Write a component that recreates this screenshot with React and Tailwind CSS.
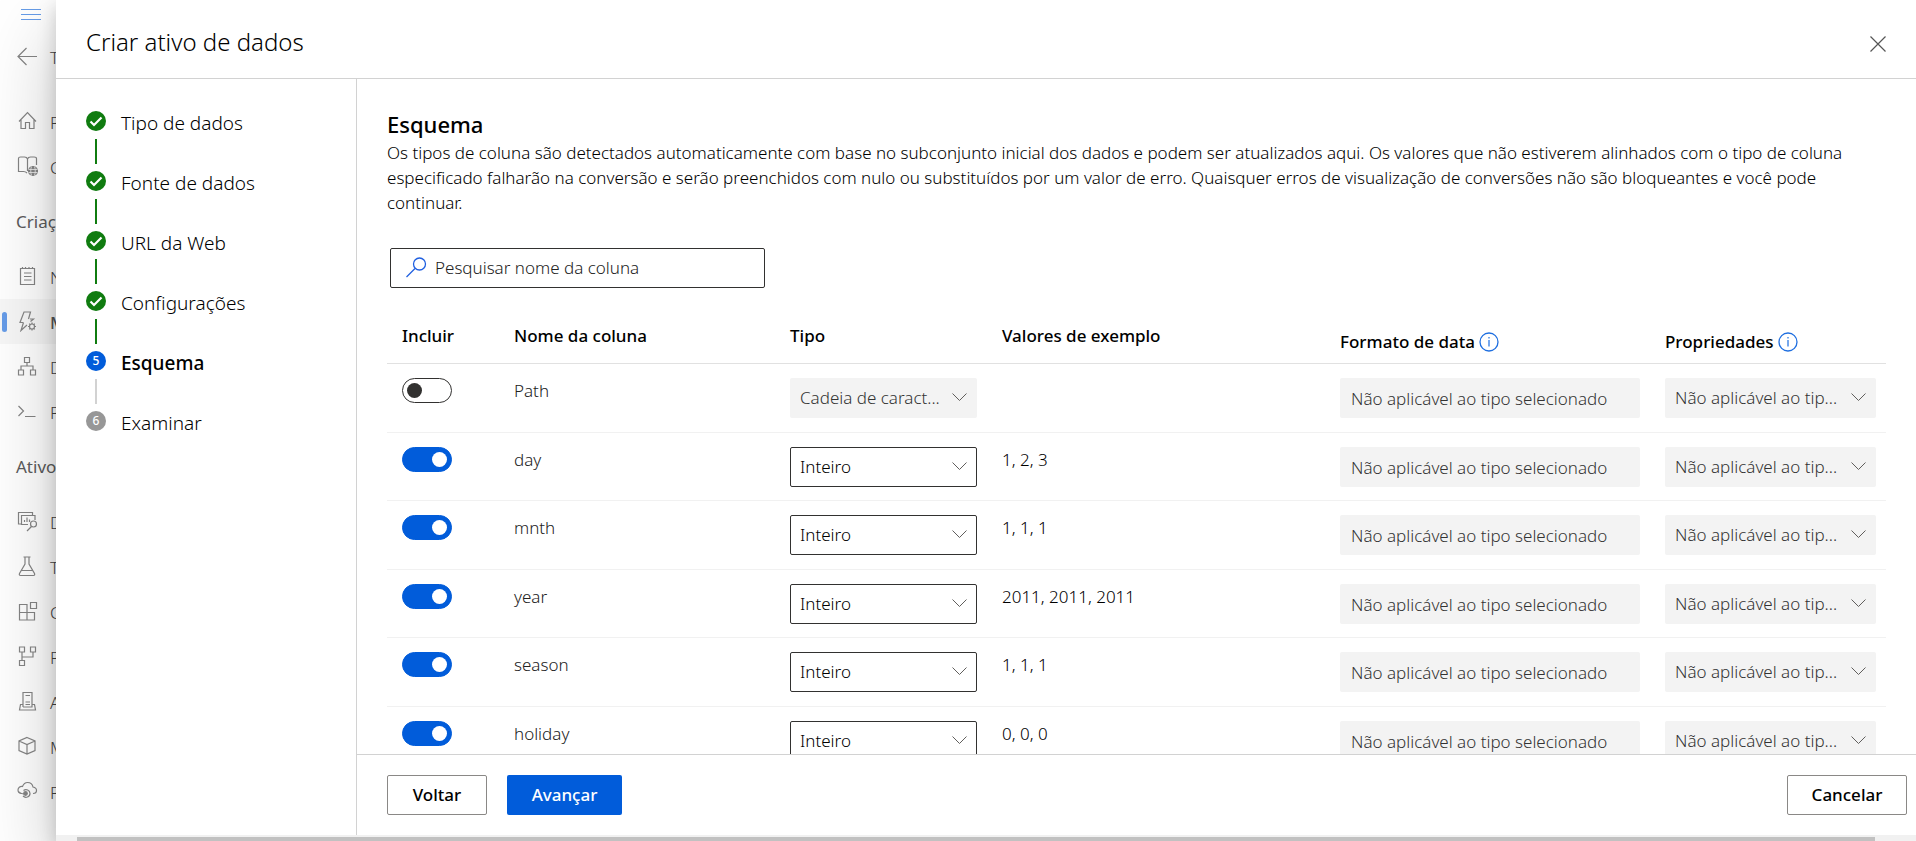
const NAV_ICONS = {
  home: <path d="M2 10.5 10.500 1.500 19 10.5M4 9v8.500h4.500v-6h4v6H17V9" />,
  book: (
    <>
      <path d="M10 17c-1-1-2-1.500-3.500-1.500H1.500V2.500c0-1 1-1.500 2-1.500h4c1.500 0 2.500.5 3 2 .5-1.500 1.500-2 3-2h3.500c1.500 0 2.500.5 2.500 1.500V9M10.500 3v12" />
      <circle cx="16" cy="15" r="4.500" fill="currentColor" />
      <path d="M11.500 13.500h9M11.500 16.500h9M14.500 10.500c-1 3-1 6 0 9M17.500 10.500c1 3 1 6 0 9" stroke="#f1f1f1" strokeWidth="0.8" />
    </>
  ),
  note: <path d="M3.500 2.500h14v16h-14zM5.500 1v2M8.500 1v2M12 1v2M15.500 1v2M7 7h7.500M7 10.500h7.500M7 14h7.500" />,
  bolt: (
    <>
      <path d="M13 8h3.500l-3 2.500M6.500 11.500H3L7 1h6.500L11.500 8M6.500 11.500 4 19.500 10 14" />
      <circle cx="15" cy="15.500" r="2.500" />
      <path d="M15 11.500v1.500M15 18v1.500M11 15.500h1.500M17.500 15.500H19M12.200 12.700l1 1M16.800 17.300l1 1M17.800 12.700l-1 1M13.200 17.300l-1 1" />
    </>
  ),
  tree: <path d="M7.500 1.500h5v5h-5zM1.500 14h5v5h-5zM13.500 14h5v5h-5zM10 6.500v3.500M4 14v-4h12v4" />,
  terminal: <path d="M1.500 5 6.500 10l-5 5M8 15.500h10.500" />,
  data: (
    <>
      <path d="M4 13H1.500V1.500h14V4M11 13.500H4.500V4.500H18V9M7.500 11V9M10 11V6.500M12.500 11V8.500" />
      <circle cx="16.500" cy="13" r="3" />
      <path d="m14.500 15.500-4.500 4.500" />
    </>
  ),
  flask: <path d="M6.500 1h7M8 1v7L2.500 17.500c-.5 1.500 0 2 1 2h13c1 0 1.500-.500 1-2L12 8V1M4.500 14.500h11" />,
  blocks: <path d="M2.500 3.500H10v15.500H2.500zM2.500 11.500H17.500V19H10M13.500 1.500h6v6h-6z" />,
  pipe: <path d="M2.500 1h5v5h-5zM13.500 1h5v5h-5zM2.500 14.500h5v5h-5zM5 6v8.500M16 6v5H5" />,
  server: <path d="M6 16V1.500h9V16H6M8.500 4.500H13M8.500 11H13M8.500 13.500H13M6 13.500H3.500L2.500 19h16l-1-5.500H15" />,
  cube: <path d="M10 1.500 18 5v9.500L10 18 2 14.500V5zM2 5l8 3.500L18 5M10 8.500V18" />,
  cloud: (
    <>
      <path d="M5 12.500c-2.500 0-4-1.500-4-3.500S3 5 5.500 5.500C6.500 3 8 1.500 10.500 1.500c3 0 5 2 5.500 4.500 2.500.5 3.500 2 3.500 3.500 0 2-1.500 3-3.500 3" />
      <path d="M6.500 9.500c2.500-2 6.500-.5 6.500 3s-4.500 5-7 2.500" />
      <path d="M1.500 10.500c1.500 2 4 2.500 6.500 2.500" />
      <circle cx="8.500" cy="12.500" r="1.800" fill="currentColor" />
    </>
  ),
};

function NavItem({ icon, label, active }) {
  return (
    <a
      href="#"
      className={
        active
          ? 'relative flex h-[45px] shrink-0 items-center gap-3 bg-black/3 pl-[17px] font-medium text-[#555]'
          : 'flex h-[45px] shrink-0 items-center gap-3 pl-[17px] text-[#444]'
      }
    >
      {active && <span className="absolute left-[2px] h-5 w-[5px] rounded-full bg-[#669ce8]" />}
      <svg className="size-[21px] shrink-0 text-[#858585]" viewBox="0 0 21 21" fill="none" stroke="currentColor" strokeWidth="1.2">
        {NAV_ICONS[icon]}
      </svg>
      <span className="pt-[2px]">{label}</span>
    </a>
  );
}

function NavHeading({ children }) {
  return <div className="flex h-[65px] shrink-0 items-center pl-4 text-[17px] font-normal text-[#5c5c5c]">{children}</div>;
}

function Sidebar() {
  return (
    <nav aria-label="Principal" className="flex w-14 shrink-0 flex-col bg-white">
      <button type="button" aria-label="Menu" className="mb-[6px] flex h-7 shrink-0 items-center pl-[21px] text-[#669ce8]">
        <svg className="h-3 w-5" viewBox="0 0 20 12" stroke="currentColor">
          <path d="M0 1.500h20M0 6.500h20M0 11.500h20" />
        </svg>
      </button>
      <a href="#" className="mb-5 flex h-[45px] shrink-0 items-center gap-3 pl-[17px] text-[#444]">
        <svg className="size-[21px] shrink-0 text-[#858585]" viewBox="0 0 21 21" fill="none" stroke="currentColor" strokeWidth="1.200">
          <path d="M20 10.500H1M9.500 2 1 10.500 9.500 19" />
        </svg>
        <span className="pt-[2px]">T</span>
      </a>
      <NavItem icon="home" label="P" />
      <NavItem icon="book" label="C" />
      <NavHeading>Criaç</NavHeading>
      <NavItem icon="note" label="N" />
      <NavItem icon="bolt" label="M" active />
      <NavItem icon="tree" label="D" />
      <NavItem icon="terminal" label="P" />
      <NavHeading>Ativo</NavHeading>
      <NavItem icon="data" label="D" />
      <NavItem icon="flask" label="T" />
      <NavItem icon="blocks" label="C" />
      <NavItem icon="pipe" label="P" />
      <NavItem icon="server" label="A" />
      <NavItem icon="cube" label="M" />
      <NavItem icon="cloud" label="P" />
    </nav>
  );
}

const STEPS = [
  { label: 'Tipo de dados', state: 'done' },
  { label: 'Fonte de dados', state: 'done' },
  { label: 'URL da Web', state: 'done' },
  { label: 'Configurações', state: 'done' },
  { label: 'Esquema', state: 'current' },
  { label: 'Examinar', state: 'todo' },
];

function StepMark({ state, number }) {
  if (state === 'done') {
    return (
      <svg className="size-5" viewBox="0 0 20 20" fill="none">
        <circle cx="10" cy="10" r="10" fill="#107c10" />
        <path d="m4.500 10.500 3.500 3.500 7.500-7.500" stroke="#fff" strokeWidth="2.200" />
      </svg>
    );
  }
  return (
    <span
      className={
        state === 'current'
          ? 'flex size-5 items-center justify-center rounded-full bg-[#015cda] text-xs font-medium text-white'
          : 'flex size-5 items-center justify-center rounded-full bg-[#979797] text-xs font-medium text-white'
      }
    >
      {number}
    </span>
  );
}

function Steps() {
  return (
    <ol className="w-[301px] shrink-0 border-r border-[#d2d2d2] pt-8 pl-[30px]">
      {STEPS.map((step, i) => (
        <li key={step.label} className="flex h-[60px] gap-[15px]">
          <div className="flex w-5 flex-col items-center gap-2">
            <StepMark state={step.state} number={i + 1} />
            {i < STEPS.length - 1 && (
              <span className={step.state === 'done' ? 'h-[25px] w-[2px] bg-[#107c10]' : 'h-[25px] w-[2px] bg-[#d2d2d2]'} />
            )}
          </div>
          <span className={step.state === 'current' ? 'text-[19px] leading-6 font-medium' : 'text-[19px] leading-6'}>
            {step.label}
          </span>
        </li>
      ))}
    </ol>
  );
}

function Chevron() {
  return (
    <svg className="pointer-events-none absolute top-[15px] right-[10px] h-[9px] w-[15px]" viewBox="0 0 15 9" fill="none" stroke="#605e5c">
      <path d="m.5.5 7 7 7-7" />
    </svg>
  );
}

function Select({ value, label, disabled }) {
  return (
    <div className="relative">
      <select
        aria-label={label}
        disabled={disabled}
        className={
          disabled
            ? 'block h-10 w-full appearance-none rounded-[2px] bg-[#f3f3f3] pr-8 pl-[10px] text-[#333] opacity-100'
            : 'block h-10 w-full appearance-none rounded-[2px] border border-[#323130] bg-white pr-8 pl-[9px] text-black'
        }
      >
        <option>{value}</option>
      </select>
      <Chevron />
    </div>
  );
}

function InfoIcon() {
  return (
    <svg className="size-5" viewBox="0 0 20 20" fill="none" stroke="#1f6fe0">
      <circle cx="10" cy="10" r="9" strokeWidth="1.300" />
      <path d="M10 8v6.500M10 5v1.500" strokeWidth="1.200" />
    </svg>
  );
}

const ROWS = [
  { name: 'Path', type: 'Cadeia de caract...', sample: '', on: false },
  { name: 'day', type: 'Inteiro', sample: '1, 2, 3', on: true },
  { name: 'mnth', type: 'Inteiro', sample: '1, 1, 1', on: true },
  { name: 'year', type: 'Inteiro', sample: '2011, 2011, 2011', on: true },
  { name: 'season', type: 'Inteiro', sample: '1, 1, 1', on: true },
  { name: 'holiday', type: 'Inteiro', sample: '0, 0, 0', on: true },
];

const NOT_APPLICABLE = 'Não aplicável ao tipo selecionado';

function SchemaTable() {
  return (
    <table className="mt-5 w-full table-fixed border-separate border-spacing-0 text-left">
      <colgroup>
        <col className="w-[112px]" />
        <col className="w-[276px]" />
        <col className="w-[212px]" />
        <col />
        <col className="w-[325px]" />
        <col className="w-[236px]" />
      </colgroup>
      <thead>
        <tr className="h-14 align-top leading-6 *:border-b *:border-[#e1e1e1] *:pl-[15px] *:font-medium">
          <th className="pt-4">Incluir</th>
          <th className="pt-4">Nome da coluna</th>
          <th className="pt-4">Tipo</th>
          <th className="pt-4">Valores de exemplo</th>
          <th className="pt-[22px]">
            <span className="flex items-center gap-1">
              Formato de data <InfoIcon />
            </span>
          </th>
          <th className="pt-[22px]">
            <span className="flex items-center gap-1">
              Propriedades <InfoIcon />
            </span>
          </th>
        </tr>
      </thead>
      <tbody>
        {ROWS.map((row) => (
          <tr
            key={row.name}
            className="align-top leading-[26px] odd:h-[69px] even:h-[68px] *:border-b *:border-[#f1f1f1] *:pt-[14px] *:pr-[10px] *:pl-[15px]"
          >
            <td>
              <input
                type="checkbox"
                role="switch"
                aria-label={`Incluir ${row.name}`}
                defaultChecked={row.on}
                className="flex h-[25px] w-[50px] appearance-none items-center rounded-full border border-[#323130] px-1 before:size-[15px] before:rounded-full before:bg-[#323130] checked:justify-end checked:border-[#015cda] checked:bg-[#015cda] checked:before:bg-white"
              />
            </td>
            <td className="text-[#222]">{row.name}</td>
            <td>
              <Select label={`Tipo de ${row.name}`} value={row.type} disabled={!row.on} />
            </td>
            <td>{row.sample}</td>
            <td>
              <input
                type="text"
                disabled
                aria-label={`Formato de data de ${row.name}`}
                defaultValue={NOT_APPLICABLE}
                className="block h-10 w-full rounded-[2px] bg-[#f3f3f3] px-[11px] text-[#333]"
              />
            </td>
            <td>
              <Select label={`Propriedades de ${row.name}`} value="Não aplicável ao tip..." disabled />
            </td>
          </tr>
        ))}
      </tbody>
    </table>
  );
}

function SchemaPage() {
  return (
    <main className="flex min-w-0 flex-1 flex-col">
      <section className="min-h-0 flex-1 overflow-hidden px-[30px] pt-[30px]">
        <h2 className="mb-px text-[22px] leading-[30px] font-medium">Esquema</h2>
        <p className="leading-[25px]">
          Os tipos de coluna são detectados automaticamente com base no subconjunto inicial dos dados e podem ser
          atualizados aqui. Os valores que não estiverem alinhados com o tipo de coluna especificado falharão na
          conversão e serão preenchidos com nulo ou substituídos por um valor de erro. Quaisquer erros de visualização
          de conversões não são bloqueantes e você pode continuar.
        </p>
        <label className="mt-[33px] ml-[3px] flex h-10 w-[375px] items-center gap-2 rounded-[2px] border border-[#323130] px-[14px]">
          <svg className="size-[22px] shrink-0" viewBox="0 0 22 22" fill="none" stroke="#1f5fe0" strokeWidth="1.300">
            <circle cx="14.500" cy="7" r="6" />
            <path d="M10 11.500 1.500 20" />
          </svg>
          <input
            type="search"
            aria-label="Pesquisar nome da coluna"
            placeholder="Pesquisar nome da coluna"
            className="min-w-0 flex-1 outline-none placeholder:text-[#222]"
          />
        </label>
        <SchemaTable />
      </section>
      <footer className="flex h-[81px] shrink-0 items-start gap-5 border-t border-[#d2d2d2] pt-5 pr-[9px] pl-[30px] font-medium">
        <button type="button" className="h-10 w-[100px] rounded-[2px] border border-[#8a8886]">
          Voltar
        </button>
        <button type="button" className="h-10 w-[115px] rounded-[2px] bg-[#015cda] text-white">
          Avançar
        </button>
        <button type="button" className="ml-auto h-10 w-[120px] rounded-[2px] border border-[#8a8886]">
          Cancelar
        </button>
      </footer>
    </main>
  );
}

export default function App() {
  return (
    <div className="flex h-screen overflow-hidden bg-white font-['Noto_Sans','Open_Sans',sans-serif] text-[17px] font-light text-black">
      <Sidebar />
      <div
        role="dialog"
        aria-labelledby="dialog-title"
        className="relative z-10 flex min-w-0 flex-1 flex-col bg-white shadow-[0_32px_72px_rgba(0,0,0,0.22),0_6px_18px_rgba(0,0,0,0.18)]"
      >
        <header className="flex h-[79px] shrink-0 items-center justify-between border-b border-[#d2d2d2] pt-[6px] pr-[30px] pl-[30px]">
          <h1 id="dialog-title" className="text-2xl">
            Criar ativo de dados
          </h1>
          <button type="button" aria-label="Fechar" className="pt-1">
            <svg className="size-4" viewBox="0 0 16 16" fill="none" stroke="#555" strokeWidth="1.200">
              <path d="m.5.5 15 15M15.500.5l-15 15" />
            </svg>
          </button>
        </header>
        <div className="flex min-h-0 flex-1">
          <Steps />
          <SchemaPage />
        </div>
        <div className="h-[6px] shrink-0 bg-[#f1f1f1] pt-[2px] pr-[41px] pl-[21px]">
          <div className="h-full bg-[#c1c1c1]" />
        </div>
      </div>
    </div>
  );
}
